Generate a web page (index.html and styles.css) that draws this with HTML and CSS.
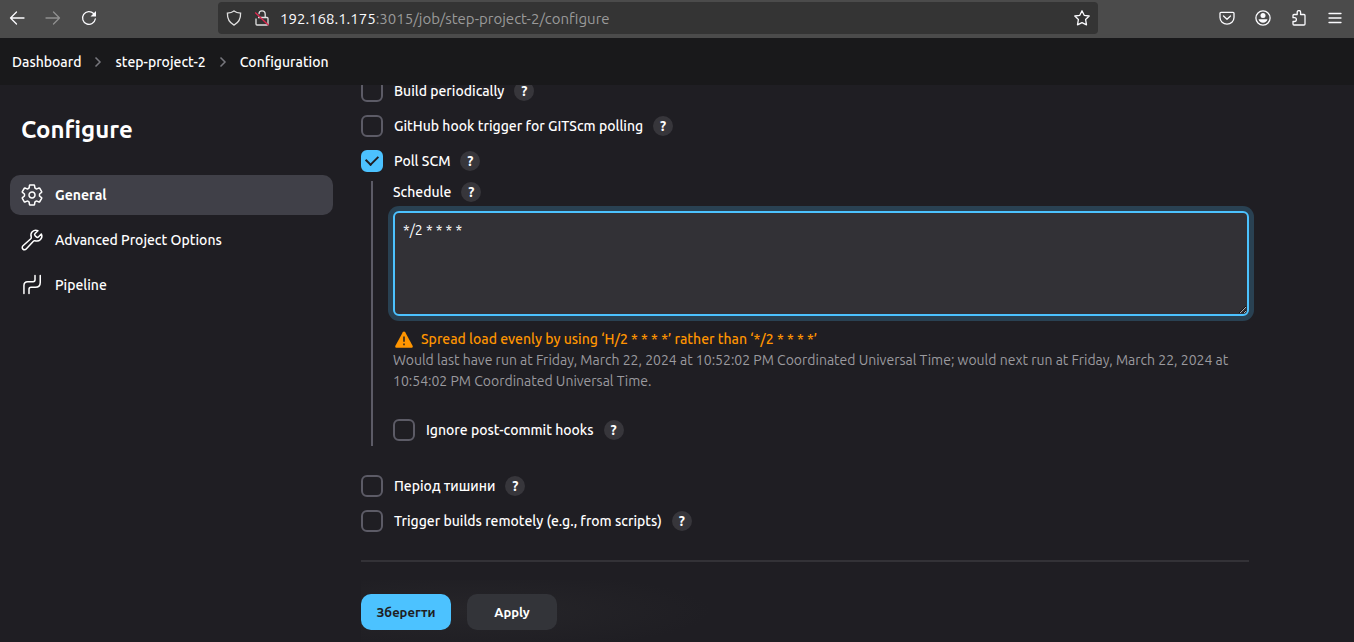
FILE: index.html
```html
<!DOCTYPE html>
<html lang="en">
<head>
<meta charset="utf-8">
<meta name="viewport" content="width=device-width, initial-scale=1">
<title>Configure step-project-2</title>
<link rel="stylesheet" href="styles.css">
</head>
<body>
<div class="app">
  <div class="toolbar">
    <div class="toolbar-nav">
      <button class="tool" type="button" aria-label="Back"><svg viewBox="0 0 16 16"><path d="M15 8H1.5M7.5 2 1.5 8l6 6"/></svg></button>
      <button class="tool tool-dim" type="button" aria-label="Forward"><svg viewBox="0 0 16 16"><path d="M1 8h13.500M8.500 2l6 6-6 6"/></svg></button>
      <button class="tool" type="button" aria-label="Reload"><svg viewBox="0 0 16 16"><path d="M14.300 9A6.400 6.400 0 1 1 12.600 3.500L14 5"/><path class="solid" d="M15 1v5.500H9.500z"/></svg></button>
    </div>
    <div class="address">
      <svg class="address-icon" viewBox="0 0 16 16"><path d="M8 .9c2 1.500 4.200 2 6.600 2.200.2 5.600-1.400 9.400-6.600 12C2.800 12.500 1.200 8.700 1.400 3.100 3.800 2.900 6 2.400 8 .9z"/></svg>
      <svg class="address-icon" viewBox="0 0 16 16"><path d="M5 4.200C5 2 6.200.8 8 .8S11.200 2 11.200 4.200V7M4 7.500h9a1 1 0 0 1 1 1V14a1 1 0 0 1-1 1H3a1 1 0 0 1-1-1V8.500"/><path class="slash" d="M1.200 2.500 14.500 15.200"/></svg>
      <span class="url"><span class="url-host">192.168.1.175</span>:3015/job/step-project-2/configure</span>
      <button class="tool" type="button" aria-label="Bookmark this page"><svg viewBox="0 0 16 16"><path d="M8 .8l2.200 4.500 5 .7-3.600 3.500.9 5.300L8 12.600l-4.500 2.200.9-5.300L.8 6l5-.7z"/></svg></button>
    </div>
    <div class="toolbar-menu">
      <button class="tool" type="button" aria-label="Save to Pocket"><svg viewBox="0 0 16 16"><path d="M2 2.300h12a1 1 0 0 1 1 1V7.500a7 6.600 0 0 1-14 0V3.300a1 1 0 0 1 1-1zM4.500 6 8 9.300 11.500 6"/></svg></button>
      <button class="tool" type="button" aria-label="Account"><svg viewBox="0 0 16 16"><circle cx="8" cy="8" r="7.100"/><circle class="solid" cx="8" cy="5.600" r="2.500"/><path class="solid" d="M3.500 9.300h9c-.6 2.300-2.300 3.500-4.500 3.500s-3.900-1.200-4.500-3.500z"/></svg></button>
      <button class="tool" type="button" aria-label="Extensions"><svg viewBox="0 0 16 16"><path d="M2 6.500V5.500a1 1 0 0 1 1-1h3.200V2.200a1.700 1.700 0 0 1 3.400 0v2.300H13a1 1 0 0 1 1 1V14a1 1 0 0 1-1 1H3a1 1 0 0 1-1-1v-2.500h1.500a1.900 1.900 0 0 0 0-3.800H2z"/></svg></button>
      <button class="tool" type="button" aria-label="Open menu"><svg viewBox="0 0 16 16"><path d="M2 3.500h12M2 8h12M2 12.500h12"/></svg></button>
    </div>
  </div>

  <nav class="crumbs" aria-label="Breadcrumb">
    <a href="#dashboard">Dashboard</a>
    <svg class="chevron" viewBox="0 0 8 12"><path d="M1.500 1.500 6 6l-4.500 4.500"/></svg>
    <a href="#project">step-project-2</a>
    <svg class="chevron" viewBox="0 0 8 12"><path d="M1.500 1.500 6 6l-4.500 4.500"/></svg>
    <a href="#configuration">Configuration</a>
  </nav>

  <div class="page">
    <aside class="side">
      <h1>Configure</h1>
      <nav class="tasks" aria-label="Sections">
        <a class="task task-active" href="#general"><svg viewBox="0 0 512 512"><path d="M262.290 192.310a64 64 0 1057.400 57.400 64.130 64.130 0 00-57.400-57.400zM416.390 256a154.340 154.340 0 01-1.530 20.790l45.210 35.460a10.810 10.810 0 012.450 13.750l-42.770 74a10.810 10.810 0 01-13.140 4.590l-44.900-18.080a16.110 16.110 0 00-15.170 1.750A164.480 164.480 0 01325 400.800a15.940 15.940 0 00-8.820 12.140l-6.730 47.890a11.080 11.080 0 01-10.680 9.170h-85.540a11.110 11.110 0 01-10.690-8.870l-6.720-47.820a16.070 16.070 0 00-9-12.220 155.300 155.300 0 01-21.460-12.570 16 16 0 00-15.110-1.710l-44.890 18.070a10.810 10.810 0 01-13.140-4.580l-42.770-74a10.800 10.800 0 012.450-13.750l38.210-30a16.050 16.050 0 006-14.080c-.36-4.170-.58-8.330-.58-12.500s.21-8.270.58-12.350a16 16 0 00-6.070-13.940l-38.190-30A10.810 10.810 0 0149.480 186l42.770-74a10.810 10.810 0 0113.140-4.590l44.900 18.080a16.110 16.110 0 0015.170-1.750A164.480 164.480 0 01187 111.200a15.940 15.940 0 008.820-12.140l6.730-47.890A11.080 11.080 0 01213.230 42h85.540a11.110 11.110 0 0110.690 8.870l6.720 47.820a16.070 16.070 0 009 12.220 155.300 155.300 0 0121.460 12.570 16 16 0 0015.110 1.710l44.890-18.070a10.810 10.810 0 0113.140 4.580l42.770 74a10.800 10.800 0 01-2.450 13.750l-38.210 30a16.050 16.050 0 00-6.050 14.080c.33 4.140.55 8.300.55 12.470z"/></svg>General</a>
        <a class="task" href="#advanced"><svg viewBox="0 0 512 512"><path d="M393.870 190a32.100 32.100 0 01-45.250 0l-26.570-26.570a32.090 32.090 0 010-45.260L382.190 58a1 1 0 00-.3-1.640c-38.820-16.640-89.150-8.160-121.110 23.570-30.580 30.350-32.320 76-21.120 115.840a31.930 31.930 0 01-9.060 32.080L64 380a48.170 48.170 0 1068 68l153.860-167a31.930 31.930 0 0131.600-9.130c39.540 10.590 84.540 8.600 114.720-21.190 32.490-32 39.500-88.560 23.750-120.930a1 1 0 00-1.600-.26z"/></svg>Advanced Project Options</a>
        <a class="task" href="#pipeline"><svg viewBox="0 0 512 512"><path d="M84 436V264q0-80 80-80h116q40 0 40-40V52M192 436v-88q0-44 44-44h92q104 0 104-104V52"/></svg>Pipeline</a>
      </nav>
    </aside>

    <main class="main">
      <form class="form">
        <div class="triggers">
          <div class="option"><input type="checkbox" id="periodic"><label for="periodic">Build periodically</label><button class="help" type="button">?</button></div>
          <div class="option"><input type="checkbox" id="hook"><label for="hook">GitHub hook trigger for GITScm polling</label><button class="help" type="button">?</button></div>
          <div class="option"><input type="checkbox" id="poll" checked><label for="poll">Poll SCM</label><button class="help" type="button">?</button></div>
          <div class="nested">
            <div class="field-title"><label for="schedule">Schedule</label><button class="help" type="button">?</button></div>
            <textarea id="schedule" class="schedule" spellcheck="false">*/2 * * * *</textarea>
            <p class="warning"><svg viewBox="0 0 18 17"><path d="M9 .5c.5 0 .9.300 1.200.7l7.400 13.500c.5 1-.1 2-1.200 2H1.600c-1.100 0-1.700-1-1.200-2L7.800 1.200C8.100.8 8.500.5 9 .5z"/><path class="mark" d="M9 5.500v5.200M9 12.600v1.700"/></svg>Spread load evenly by using ‘H/2 * * * *’ rather than ‘*/2 * * * *’</p>
            <p class="next-run">Would last have run at Friday, March 22, 2024 at 10:52:02 PM Coordinated Universal Time; would next run at Friday, March 22, 2024 at 10:54:02 PM Coordinated Universal Time.</p>
            <div class="option option-nested"><input type="checkbox" id="ignore"><label for="ignore">Ignore post-commit hooks</label><button class="help" type="button">?</button></div>
          </div>
          <div class="option"><input type="checkbox" id="quiet"><label for="quiet">Період тишини</label><button class="help" type="button">?</button></div>
          <div class="option"><input type="checkbox" id="remote"><label for="remote">Trigger builds remotely (e.g., from scripts)</label><button class="help" type="button">?</button></div>
        </div>
        <hr>
        <div class="actions">
          <button class="btn btn-primary" type="submit">Зберегти</button>
          <button class="btn" type="button">Apply</button>
        </div>
      </form>
    </main>
  </div>
</div>
</body>
</html>
```
FILE: styles.css
```css
* { box-sizing: border-box; }

body {
  margin: 0;
  background: #1f1e23;
  color: #fff;
  font: 500 14px/21px Ubuntu, "Noto Sans", sans-serif;
}

a { color: inherit; text-decoration: none; }
button, textarea { font: inherit; color: inherit; }
svg { display: block; fill: none; stroke: currentColor; }

.app {
  display: flex;
  flex-direction: column;
  height: 100vh;
  overflow: hidden;
}

/* Browser toolbar */
.toolbar {
  display: grid;
  grid-template-columns: 210px minmax(0, 880px) 1fr;
  column-gap: 8px;
  flex: none;
  align-items: center;
  height: 38px;
  padding-bottom: 2px;
  background: #4b4b4b;
  color: #fbfbfe;
}
.toolbar-nav, .toolbar-menu { display: flex; align-items: center; gap: 20px; }
.toolbar-nav { padding-left: 9px; }
.toolbar-menu { justify-content: flex-end; padding-right: 11px; }
.tool {
  display: block;
  padding: 0;
  border: 0;
  background: none;
}
.tool svg { width: 16px; height: 16px; stroke-width: 1.3; stroke-linejoin: round; stroke-linecap: round; }
.tool .solid { fill: currentColor; stroke: none; }
.tool-dim { color: #909090; }
.address {
  display: flex;
  align-items: center;
  height: 32px;
  padding: 0 8px;
  border-radius: 4px;
  background: #343434;
}
.address-icon { width: 16px; height: 16px; margin-right: 12px; color: #e0e0e0; stroke-width: 1.3; }
.address-icon + .address-icon { margin-right: 10px; }
.slash { stroke: #e22850; }
.url { flex: 1; color: #9a9a9a; font-size: 15px; font-weight: 400; }
.url-host { color: #fbfbfe; }

/* Breadcrumbs */
.crumbs {
  display: flex;
  flex: none;
  align-items: center;
  gap: 13px;
  height: 47px;
  padding: 1px 12px 0;
  background: #19191b;
}
.chevron { width: 8px; height: 12px; color: #77777d; stroke-width: 1.5; }

.page {
  display: grid;
  grid-template-columns: 343px minmax(0, 1fr);
  flex: 1;
  min-height: 0;
}

/* Sidebar */
.side { padding: 28px 10px; }
.side h1 { margin: 0 11px 29px; font-size: 24px; line-height: 33px; font-weight: 700; }
.tasks { display: grid; gap: 5px; }
.task {
  display: flex;
  align-items: center;
  gap: 11px;
  height: 40px;
  padding: 0 10px;
  border-radius: 10px;
}
.task svg { width: 24px; height: 24px; stroke-width: 32; stroke-linejoin: round; stroke-linecap: round; }
.task-active { background: #404048; font-weight: 700; }

/* Configuration form */
.main { overflow: hidden; padding: 0 105px 0 18px; }
.form { display: flex; flex-direction: column; height: 100%; }
.triggers { margin-top: -12px; }
.option, .field-title { display: flex; align-items: center; }
.option { height: 35px; }
.option label, .field-title label { padding-top: 1px; }
.option input {
  display: grid;
  place-items: center;
  appearance: none;
  width: 22px;
  height: 22px;
  margin: 0 11px 0 0;
  border: 2px solid #5c5b66;
  border-radius: 6px;
}
.option input:checked { border-color: #4cc2ff; background: #4cc2ff; }
.option input:checked::before {
  content: "";
  width: 10px;
  height: 6px;
  margin-bottom: 3px;
  border: solid #1f1e23;
  border-width: 0 0 2px 2px;
  rotate: -45deg;
}
.help {
  width: 20px;
  height: 20px;
  margin-left: 10px;
  padding: 0;
  border: 0;
  border-radius: 50%;
  background: #37363b;
  font-size: 14px;
  line-height: 18px;
  font-weight: 600;
}
.nested {
  margin: 3px 0 22px 10px;
  padding-left: 20px;
  border-left: 2px solid #5c5b66;
}
.schedule {
  display: block;
  width: 100%;
  height: 105px;
  margin: 8px 0 13px;
  padding: 7px 8px;
  border: 2px solid #4cc2ff;
  border-radius: 6px;
  outline: none;
  background: #323136;
  box-shadow: 0 0 0 5px #294152;
  font-weight: 400;
  resize: vertical;
}
.warning { display: flex; align-items: center; gap: 8px; margin: 0; padding-left: 2px; color: #ff9500; }
.warning svg { width: 18px; height: 17px; }
.warning svg path { fill: #ff9500; stroke: none; }
.warning svg .mark { stroke: #1f1e23; stroke-width: 1.5; }
.next-run { margin: 0; color: #9b9a9f; font-weight: 400; }
.option-nested { height: 32px; margin-top: 22px; }
hr { width: 100%; margin: 22px 0 0; border: 0; border-top: 2px solid #333237; }
.actions {
  display: flex;
  gap: 16px;
  margin-top: auto;
  padding: 14px 0 12px;
  background: radial-gradient(ellipse 240px 40px at 110px 50%, #262529, #1f1e23);
}
.btn {
  min-width: 90px;
  height: 36px;
  padding: 0 14px;
  border: 0;
  border-radius: 10px;
  background: #333439;
  font-size: 13px;
  font-weight: 600;
}
.btn-primary { background: #4cc2ff; color: #1f1e23; }
```
